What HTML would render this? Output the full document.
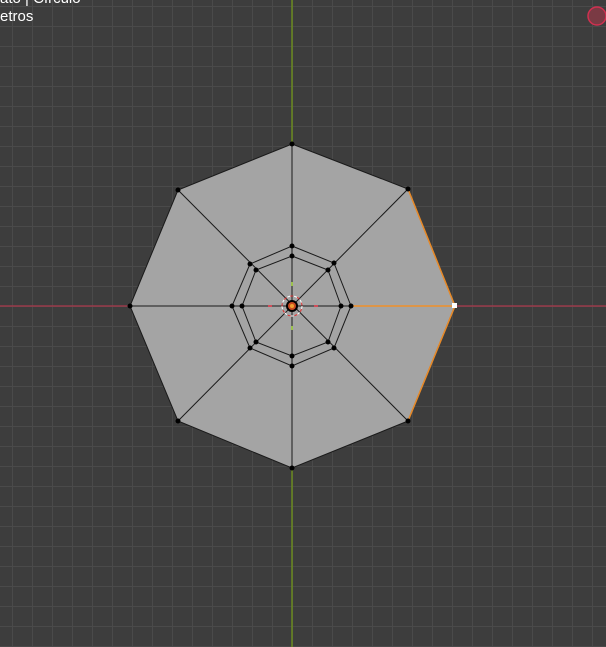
<!DOCTYPE html>
<html><head><meta charset="utf-8"><style>
html,body{margin:0;padding:0;background:#3d3d3d;width:606px;height:647px;overflow:hidden}
.t{position:absolute;left:0;color:#fff;font:15px "Liberation Sans",sans-serif}
</style></head><body>
<svg width="606" height="647" style="position:absolute;left:0;top:0">
<defs>
<pattern id="g" width="20" height="20" patternUnits="userSpaceOnUse" x="12" y="6">
<path d="M0 0H20M0 0V20" stroke="#4a4a4a" stroke-width="2" fill="none"/>
</pattern>
</defs>
<rect width="606" height="647" fill="#3d3d3d"/>
<rect width="606" height="647" fill="url(#g)"/>
<line x1="0" y1="306" x2="606" y2="306" stroke="#9a3a4a" stroke-width="1.5"/>
<line x1="292" y1="0" x2="292" y2="647" stroke="#6a8a1e" stroke-width="1.5"/>
<polygon points="292,144 408,189 455,306 408,421 292,468 178,421 130,306 178,190" fill="#a4a4a4" stroke="#1a1a1a" stroke-width="1"/>
<g stroke="#1a1a1a" stroke-width="1">
<line x1="292" y1="144" x2="292" y2="468"/>
<line x1="130" y1="306" x2="351" y2="306"/>
<line x1="178" y1="190" x2="408" y2="421"/>
<line x1="408" y1="189" x2="178" y2="421"/>
</g>
<polygon points="292,246 334,263 351,306 334,348 292,366 250,348 232,306 250,264" fill="none" stroke="#1a1a1a"/>
<polygon points="292,256 328,270 341,306 328,342 292,356 256,342 242,306 256,270" fill="none" stroke="#1a1a1a"/>
<line x1="351" y1="306" x2="455" y2="306" stroke="#f0902a" stroke-width="1.5"/>
<polyline points="408,189 455,306 408,421" fill="none" stroke="#e88a28" stroke-width="1.5"/>
<g fill="#000">
<circle cx="292" cy="144" r="2.5"/><circle cx="408" cy="189" r="2.5"/><circle cx="408" cy="421" r="2.5"/>
<circle cx="292" cy="468" r="2.5"/><circle cx="178" cy="421" r="2.5"/><circle cx="130" cy="306" r="2.5"/><circle cx="178" cy="190" r="2.5"/>
<circle cx="292" cy="246" r="2.5"/><circle cx="334" cy="263" r="2.5"/><circle cx="351" cy="306" r="2.5"/><circle cx="334" cy="348" r="2.5"/>
<circle cx="292" cy="366" r="2.5"/><circle cx="250" cy="348" r="2.5"/><circle cx="232" cy="306" r="2.5"/><circle cx="250" cy="264" r="2.5"/>
<circle cx="292" cy="256" r="2.5"/><circle cx="328" cy="270" r="2.5"/><circle cx="341" cy="306" r="2.5"/><circle cx="328" cy="342" r="2.5"/>
<circle cx="292" cy="356" r="2.5"/><circle cx="256" cy="342" r="2.5"/><circle cx="242" cy="306" r="2.5"/><circle cx="256" cy="270" r="2.5"/>
<circle cx="292" cy="306" r="6"/>
</g>
<rect x="452" y="303" width="5" height="5" fill="#fff"/>
<circle cx="292" cy="306" r="10" fill="none" stroke="#fff" stroke-width="1" stroke-dasharray="4 3"/>
<circle cx="292" cy="306" r="10" fill="none" stroke="#e03030" stroke-width="1" stroke-dasharray="3 4" stroke-dashoffset="4"/>
<circle cx="292" cy="306" r="4" fill="#c84a20"/>
<circle cx="292" cy="306" r="2" fill="#f0a030"/>
<line x1="292" y1="282" x2="292" y2="286" stroke="#9acd32" stroke-width="1.5"/>
<line x1="292" y1="326" x2="292" y2="330" stroke="#9acd32" stroke-width="1.5"/>
<line x1="268" y1="306" x2="272" y2="306" stroke="#e03040" stroke-width="1.5"/>
<line x1="314" y1="306" x2="318" y2="306" stroke="#e03040" stroke-width="1.5"/>
<circle cx="597" cy="16" r="9" fill="#7a3a44" stroke="#d03050" stroke-width="1.5"/>
</svg>
<div class="t" style="top:-10px">ato | Círculo</div>
<div class="t" style="top:8px">etros</div>
</body></html>
